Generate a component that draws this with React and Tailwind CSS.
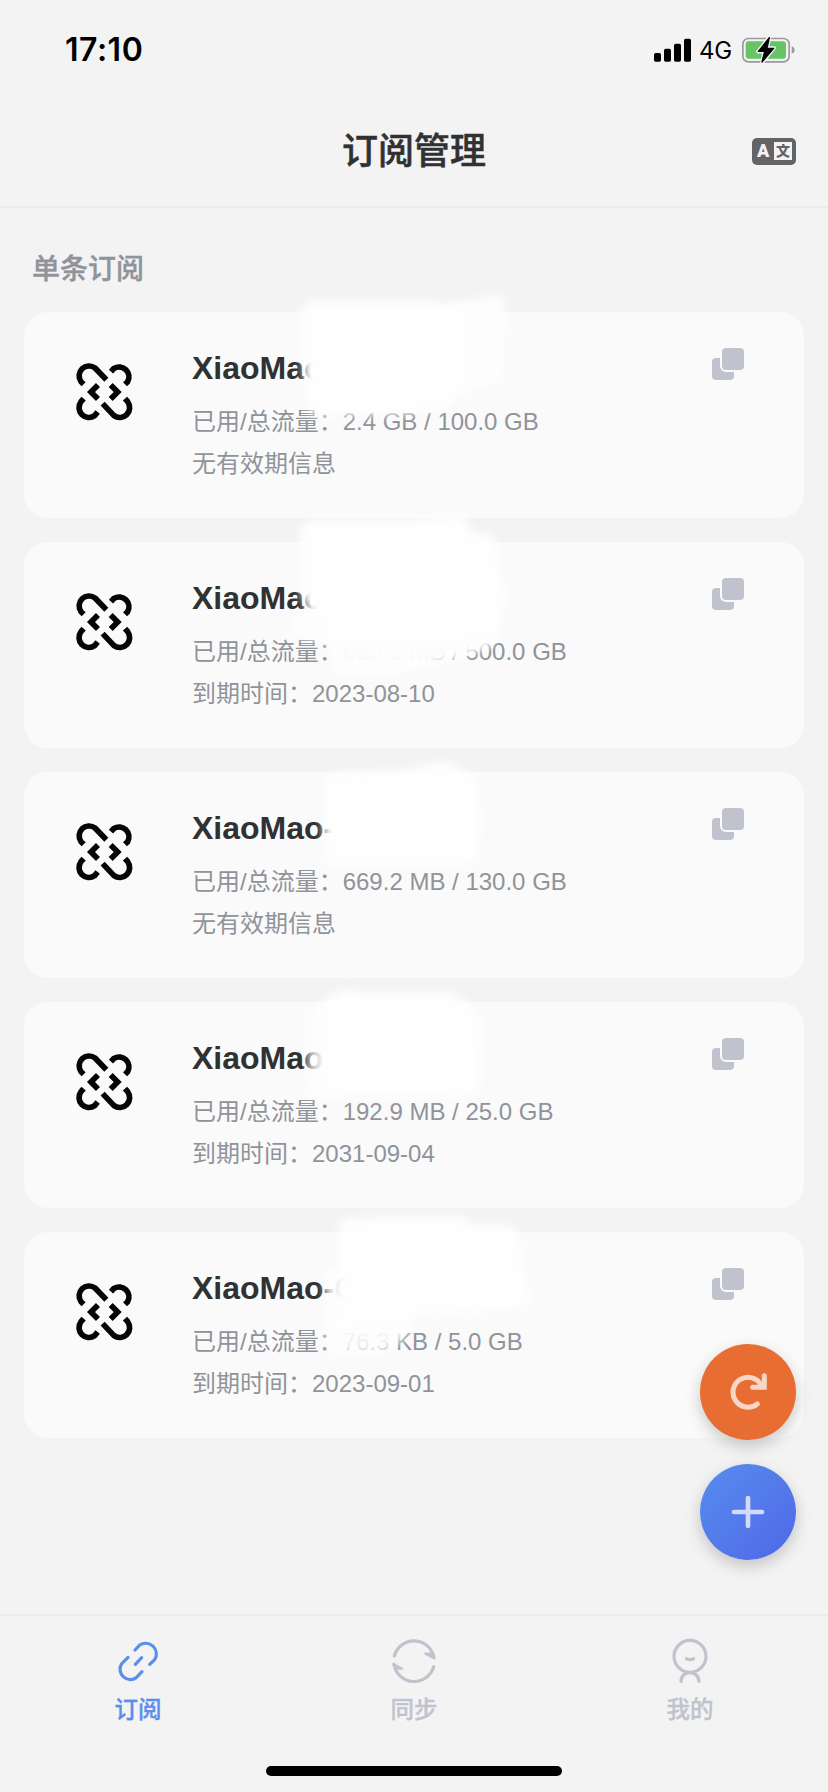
const subscriptions = [
  {
    name: "XiaoMao",
    usage: "2.4 GB / 100.0 GB",
    expiry: "无有效期信息",
    mask: [
      { d: "M278 4 Q279 -9 291 -9 L404 -9 L418 -3 L448 -8 L450 60 L432 80 L418 94 L380 100 L292 102 L284 88 Z", o: 1 },
      { d: "M400 -4 L418 -3 L474 -15 L479 -8 L475 66 L440 78 L416 93 Z", o: 0.9 },
    ],
  },
  {
    name: "XiaoMao",
    usage: "665.3 MB / 500.0 GB",
    expiry: "到期时间：2023-08-10",
    mask: [
      { d: "M278 -10 Q278 -19 290 -19 L385 -20 L438 -24 L446 -9 L468 -4 L474 28 L480 58 L473 84 L464 96 L420 106 L312 106 L304 94 L294 78 L280 55 Z", o: 1 },
      { d: "M268 80 L292 66 L472 84 L464 104 L440 112 L409 121 L351 132 L314 129 L305 99 L270 90 Z", o: 0.96 },
    ],
  },
  {
    name: "XiaoMao-",
    usage: "669.2 MB / 130.0 GB",
    expiry: "无有效期信息",
    mask: [
      { d: "M301 10 Q303 2 318 2 L378 1 L422 -9 L434 -1 L450 5 L454 45 L452 86 L438 92 L308 92 L302 85 Z", o: 1 },
    ],
  },
  {
    name: "XiaoMao",
    usage: "192.9 MB / 25.0 GB",
    expiry: "到期时间：2031-09-04",
    mask: [
      { d: "M297 8 L303 -3 L320 -11 L340 -8 L426 -8 L442 2 L455 15 L454 83 L438 93 L297 93 Z", o: 1 },
      { d: "M284 14 L310 4 L310 92 L286 92 Z", o: 0.75 },
    ],
  },
  {
    name: "XiaoMao-C",
    usage: "76.3 KB / 5.0 GB",
    expiry: "到期时间：2023-09-01",
    mask: [
      { d: "M317 -6 Q318 -12 328 -12 L437 -14 L446 -6 L490 -4 L497 28 L503 70 L490 76 L444 78 L390 80 L374 97 L308 99 L307 84 L315 76 Z", o: 1 },
      { d: "M303 42 L330 36 L392 76 L378 106 L360 119 L308 119 L303 100 Z", o: 0.88 },
    ],
  },
];

function StatusBar() {
  return (
    <div className="flex h-24 items-center justify-between pr-[32px] pl-[65px] pt-1">
      <span className="text-[32px] leading-10 font-semibold tracking-[0.5px] text-black font-['Inter',sans-serif]">
        17:10
      </span>
      <div className="flex items-center">
        <svg className="h-[24px] w-[38px]" viewBox="0 0 114 72">
          <rect x="0" y="45" width="21" height="26" rx="5" />
          <rect x="30" y="32" width="21" height="39" rx="5" />
          <rect x="60" y="17" width="21" height="54" rx="5" />
          <rect x="90" y="2" width="21" height="69" rx="5" />
        </svg>
        <span className="ml-[7px] w-[35px] pt-px text-[24px] leading-6 font-normal tracking-[-0.3px] text-black font-['Inter',sans-serif]">
          4G
        </span>
        <svg className="ml-[8px] h-[28px] w-[54px]" viewBox="0 0 162 84">
          <rect x="2.5" y="7.5" width="139" height="70" rx="17" fill="none" stroke="#9a9a9d" strokeWidth="5" />
          <rect x="11" y="16" width="121" height="52" rx="9" fill="#65c466" />
          <path d="M149 30 Q158 34 158 42 Q158 50 149 53 Z" fill="#9a9a9d" />
          <path
            d="M82 3 L48 47 L67 47 L60 80 L96 36 L76 36 Z"
            stroke="#f3f3f3"
            strokeWidth="11"
            strokeLinejoin="round"
            fill="#f3f3f3"
          />
          <path d="M82 5 L49 46 L68 46 L60 78 L95 37 L75 37 Z" stroke="#000" strokeWidth="4" strokeLinejoin="round" />
        </svg>
      </div>
    </div>
  );
}

function TitleBar() {
  return (
    <header className="grid h-28 grid-cols-3 items-center border-b-2 border-[#ebebec] pr-8">
      <span />
      <h1 className="ml-8 pt-0.5 text-center text-[36px] leading-[44px] font-medium text-[#303133] [-webkit-text-stroke:0.5px_#303133]">
        订阅管理
      </h1>
      <div className="flex h-[27px] w-[44px] items-center justify-between justify-self-end rounded-[5px] bg-[#636468] pr-1 pl-[5px]">
        <span className="text-[18px] leading-none font-black text-[#f3f3f3] font-['Roboto',sans-serif]">A</span>
        <span className="flex size-[18px] items-center justify-center bg-[#f3f3f3] text-[14px] leading-none font-black text-[#636468]">
          文
        </span>
      </div>
    </header>
  );
}

function KnotIcon() {
  return (
    <svg
      className="mt-[50px] ml-[51px] size-[59px] shrink-0"
      viewBox="44 51 177 177"
      fill="none"
      stroke="#050505"
      strokeWidth="17"
    >
      <path d="M70 118 L62 110 A29.7 29.7 0 0 1 104 69 L138 104" />
      <path d="M152 80 L161 70 A29.7 29.7 0 0 1 202 110 L194 118" />
      <path d="M70 161 L62 170 A29.7 29.7 0 0 0 103 212 L112 201" />
      <path d="M194 161 L202 170 A29.7 29.7 0 0 1 161 212 L127 176" />
      <path d="M113 120 L92 141 L113 162" />
      <path d="M151 120 L172 141 L151 162" />
    </svg>
  );
}

function CopyIcon() {
  return (
    <svg className="mt-[36px] mr-[60px] ml-auto size-8 shrink-0" viewBox="0 0 32 32" fill="#c0c3cd">
      <rect x="10" y="0" width="22" height="22" rx="4" />
      <path d="M8 10 H4 A4 4 0 0 0 0 14 V28 A4 4 0 0 0 4 32 H18 A4 4 0 0 0 22 28 V24 H14 A6 6 0 0 1 8 18 Z" />
    </svg>
  );
}

function SubscriptionCard({ item }) {
  return (
    <article className="relative flex h-[206px] items-start rounded-[24px] bg-[#fafafa]">
      <KnotIcon />
      <div className="ml-[58px] pt-[34px] whitespace-nowrap">
        <h3 className="text-[32px] leading-[44px] font-bold text-[#303133]">{item.name}</h3>
        <div className="mt-[11px] text-[24px] leading-[42px] text-[#909399]">
          <p>已用/总流量：{item.usage}</p>
          <p>{item.expiry}</p>
        </div>
      </div>
      <CopyIcon />
      <svg className="pointer-events-none absolute inset-0 h-full w-full overflow-visible" viewBox="0 0 780 206">
        <defs>
          <filter id="soft" x="-20%" y="-20%" width="140%" height="140%">
            <feGaussianBlur stdDeviation="4" />
          </filter>
        </defs>
        {item.mask.map((m) => (
          <path
            key={m.d}
            d={m.d}
            fill="#fefefe"
            stroke="#fefefe"
            strokeWidth="4"
            strokeLinejoin="round"
            opacity={m.o}
            filter="url(#soft)"
          />
        ))}
      </svg>
    </article>
  );
}

function FloatingActions() {
  return (
    <div className="absolute top-[1344px] left-[700px] flex flex-col gap-6">
      <button className="size-24 rounded-full bg-[#e86d33] shadow-[0_6px_16px_rgba(0,0,0,0.2)]">
        <svg className="size-24" viewBox="0 0 288 288" fill="none" stroke="#f8d6c5" strokeWidth="15" strokeLinecap="round" strokeLinejoin="round">
          <path d="M172 180 A45 45 0 1 1 184 124" />
          <path d="M193 95 V130 H158" strokeLinejoin="miter" />
        </svg>
      </button>
      <button className="size-24 rounded-full bg-linear-to-br from-[#578ded] to-[#5067e8] shadow-[0_6px_16px_rgba(0,0,0,0.2)]">
        <svg className="size-24" viewBox="0 0 288 288" fill="none" stroke="#d1dbf9" strokeWidth="14" strokeLinecap="round">
          <path d="M144 102 V186 M102 144 H186" />
        </svg>
      </button>
    </div>
  );
}

function LinkIcon() {
  return (
    <svg className="size-12" viewBox="103 112 144 144" fill="none" stroke="#5a8eee" strokeWidth="9.5" strokeLinecap="round">
      <path d="M166 151 L179 137 A32 32 0 0 1 225 180 L210 194" />
      <path d="M145 173 L126 192 A31 31 0 0 0 170 234 L187 216" />
      <path d="M167 194 L186 174" />
    </svg>
  );
}

function SyncIcon() {
  return (
    <svg className="size-12" viewBox="930 112 144 144" fill="none" stroke="#c0c3cd" strokeWidth="9.5" strokeLinecap="round" strokeLinejoin="round">
      <path d="M943 169 A61 61 0 0 1 1062 174" />
      <path d="M1036 162 L1063 176 L1058 162 Z" fill="#c0c3cd" strokeWidth="7" />
      <path d="M1061 201 A61 61 0 0 1 942 194" />
      <path d="M966 207 L940 193 L946 206 Z" fill="#c0c3cd" strokeWidth="7" />
    </svg>
  );
}

function PersonIcon() {
  return (
    <svg className="size-12" viewBox="138 112 144 144" fill="none" stroke="#c0c3cd" strokeWidth="9.5" strokeLinecap="round">
      <circle cx="210" cy="170" r="48" />
      <path d="M199 177 Q210 183 221 177" />
      <path d="M183 245 C184 210 235 210 237 245" />
    </svg>
  );
}

const tabs = [
  { label: "订阅", Icon: LinkIcon, color: "text-[#5a8eee]" },
  { label: "同步", Icon: SyncIcon, color: "text-[#c0c3cd]" },
  { label: "我的", Icon: PersonIcon, color: "text-[#c0c3cd]" },
];

function TabBar() {
  return (
    <footer className="flex h-[178px] flex-col items-center border-t-2 border-[#ebebec]">
      <nav className="grid h-[150px] w-full grid-cols-3">
        {tabs.map(({ label, Icon, color }) => (
          <div key={label} className="flex flex-col items-center pt-[21px]">
            <Icon />
            <span className={`mt-[9px] text-[23.5px] leading-8 font-medium [-webkit-text-stroke:0.3px_currentColor] ${color}`}>
              {label}
            </span>
          </div>
        ))}
      </nav>
      <div className="h-2.5 w-[296px] rounded-full bg-black" />
    </footer>
  );
}

export default function App() {
  return (
    <div className="relative flex h-[1792px] w-[828px] flex-col overflow-hidden bg-[#f3f3f3] font-['Liberation_Sans','Noto_Sans_CJK_SC',sans-serif]">
      <StatusBar />
      <TitleBar />
      <main className="flex-1 px-6">
        <h2 className="pt-[42px] pb-[22px] pl-2 text-[28px] leading-10 font-medium text-[#909399] [-webkit-text-stroke:0.4px_#909399]">
          单条订阅
        </h2>
        <div className="flex flex-col gap-6">
          {subscriptions.map((item, i) => (
            <SubscriptionCard key={i} item={item} />
          ))}
        </div>
      </main>
      <TabBar />
      <FloatingActions />
    </div>
  );
}
